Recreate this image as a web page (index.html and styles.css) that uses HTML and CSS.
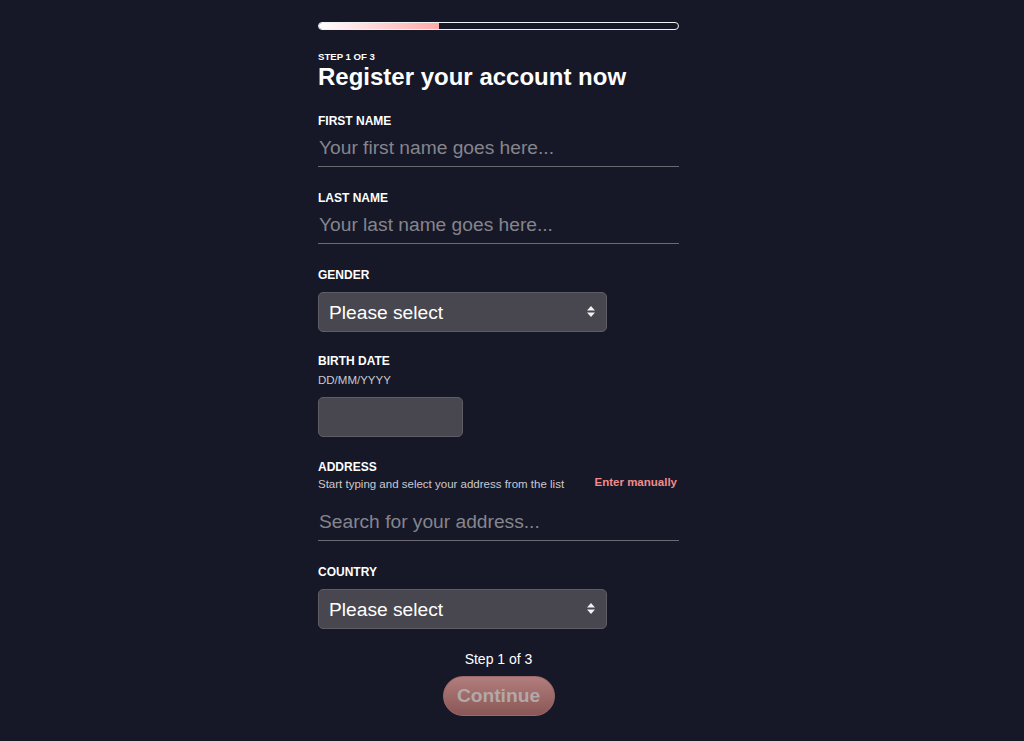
FILE: index.html
```html
<!DOCTYPE html>
<html lang="en">
<head>
<meta charset="utf-8">
<title>Register your account</title>
<link rel="stylesheet" href="styles.css">
</head>
<body>
<div class="page">
  <form class="form">
    <div class="progress"><div class="progress-fill"></div></div>
    <div class="step">Step 1 of 3</div>
    <h1 class="title">Register your account now</h1>

    <div class="field first">
      <label class="label" for="fn">First name</label>
      <input class="text-input" id="fn" type="text" placeholder="Your first name goes here...">
    </div>

    <div class="field">
      <label class="label" for="ln">Last name</label>
      <input class="text-input" id="ln" type="text" placeholder="Your last name goes here...">
    </div>

    <div class="field">
      <label class="label" for="gender">Gender</label>
      <div class="select-wrap">
        <select class="select" id="gender"><option>Please select</option></select>
        <svg class="arrows" viewBox="0 0 8 11" width="8" height="11"><path d="M4 0 L8 4.5 L0 4.5 Z M0 6.5 L8 6.5 L4 11 Z" fill="#f2f2f2"/></svg>
      </div>
    </div>

    <div class="field birth">
      <label class="label" for="bd">Birth date</label>
      <div class="hint date-hint">DD/MM/YYYY</div>
      <input class="box-input" id="bd" type="text">
    </div>

    <div class="field address">
      <label class="label" for="addr">Address</label>
      <div class="hint-row">
        <span class="hint">Start typing and select your address from the list</span>
        <span class="manual">Enter manually</span>
      </div>
      <input class="text-input search" id="addr" type="text" placeholder="Search for your address...">
    </div>

    <div class="field">
      <label class="label" for="country">Country</label>
      <div class="select-wrap">
        <select class="select" id="country"><option>Please select</option></select>
        <svg class="arrows" viewBox="0 0 8 11" width="8" height="11"><path d="M4 0 L8 4.5 L0 4.5 Z M0 6.5 L8 6.5 L4 11 Z" fill="#f2f2f2"/></svg>
      </div>
    </div>

    <div class="footer-step">Step 1 of 3</div>
    <button class="continue" type="button" disabled>Continue</button>
  </form>
</div>
</body>
</html>
```

FILE: styles.css
```css
body {
  margin: 0;
  background: #161827;
  color: #ffffff;
  font-family: "Liberation Sans", Arial, sans-serif;
}

.page {
  display: flex;
  justify-content: center;
  padding-right: 27px;
}

.form {
  width: 361px;
  display: block;
}

.progress {
  margin-top: 22px;
  height: 8px;
  box-sizing: border-box;
  border: 1.5px solid #f2f2f2;
  border-radius: 4px;
  overflow: hidden;
}

.progress-fill {
  height: 100%;
  width: 33.4%;
  background: linear-gradient(to right, #ffffff, #ffa9a9);
}

.step {
  margin-top: 21px;
  font-size: 9.6px;
  line-height: 11px;
  font-weight: bold;
  text-transform: uppercase;
}

.title {
  margin: 1px 0 0;
  font-size: 24px;
  line-height: 28px;
  font-weight: bold;
}

.field {
  margin-top: 24px;
}

.field.first {
  margin-top: 23px;
}

.field.birth {
  margin-top: 22px;
}

.field.address {
  margin-top: 23px;
}

.label {
  display: block;
  font-size: 12px;
  line-height: 14px;
  font-weight: bold;
  text-transform: uppercase;
}

.text-input {
  display: block;
  width: 100%;
  height: 31px;
  box-sizing: border-box;
  margin: 8px 0 0;
  padding: 0 0 6px 1px;
  background: transparent;
  border: 0;
  border-bottom: 1px solid #6b6a72;
  color: #ffffff;
  font-family: "Liberation Sans", Arial, sans-serif;
  font-size: 19.2px;
  line-height: 24px;
  outline: none;
}

.text-input::placeholder {
  color: #85858d;
  opacity: 1;
}

.text-input.search {
  margin-top: 19px;
}

.select-wrap {
  position: relative;
  width: 289px;
  margin-top: 10px;
}

.select {
  display: block;
  width: 100%;
  height: 40px;
  box-sizing: border-box;
  appearance: none;
  -webkit-appearance: none;
  background: #48474f;
  border: 1px solid #5e5d66;
  border-radius: 5px;
  color: #ffffff;
  font-family: "Liberation Sans", Arial, sans-serif;
  font-size: 19.2px;
  padding: 0 30px 0 10px;
  outline: none;
}

.arrows {
  position: absolute;
  right: 12px;
  top: 14px;
  pointer-events: none;
}

.hint {
  font-size: 11.5px;
  line-height: 14px;
  color: #c9c9cf;
}

.date-hint {
  margin-top: 5px;
}

.box-input {
  display: block;
  width: 145px;
  height: 40px;
  box-sizing: border-box;
  margin-top: 10px;
  background: #48474f;
  border: 1px solid #5e5d66;
  border-radius: 5px;
  outline: none;
}

.hint-row {
  display: flex;
  justify-content: space-between;
  align-items: flex-start;
  margin-top: 3px;
}

.manual {
  font-size: 11.5px;
  line-height: 10px;
  font-weight: bold;
  color: #f28b8b;
  margin-right: 2px;
}

.footer-step {
  margin-top: 22px;
  font-size: 14px;
  line-height: 16px;
  text-align: center;
}

.continue {
  display: block;
  margin: 9px auto 0;
  width: 112px;
  height: 40px;
  box-sizing: border-box;
  border: 1px solid #9c6a6a;
  border-radius: 20px;
  background: linear-gradient(to bottom, #b27d7d, #8a5656);
  color: #b3a8a8;
  font-family: "Liberation Sans", Arial, sans-serif;
  font-size: 19.2px;
  font-weight: bold;
  padding: 0;
}
```
